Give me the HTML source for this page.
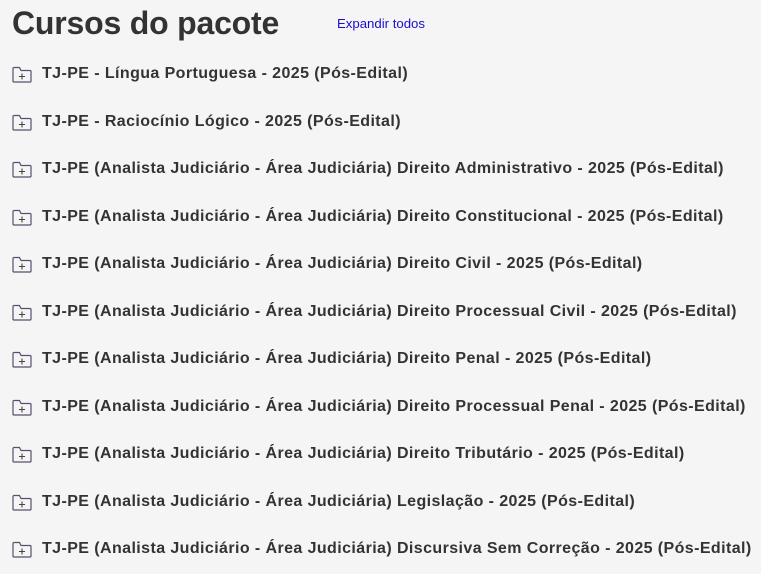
<!DOCTYPE html>
<html><head><meta charset="utf-8"><style>
body{margin:0;background:#f5f5f5;width:761px;height:574px;overflow:hidden;font-family:"Liberation Sans",sans-serif;color:#333}
h1{position:absolute;left:12px;top:1px;margin:0;font-size:32px;line-height:44px;font-weight:bold;color:#333;letter-spacing:-0.2px}
.exp{position:absolute;left:337px;top:16px;font-size:13.2px;color:#1a0dcc}
.row{position:absolute;left:12px;height:20px;display:flex;align-items:center;font-size:16px;font-weight:bold;color:#333;white-space:nowrap;letter-spacing:0.41px}
.row svg{margin-right:10px}
</style></head><body>
<h1>Cursos do pacote</h1>
<div class="exp">Expandir todos</div>
<div class="row" style="top:64px"><svg width="20" height="17" viewBox="0 0 20 17"><path d="M1 2.5V15a1 1 0 0 0 1 1h16a1 1 0 0 0 1-1V5.5a1 1 0 0 0-1-1H9L7.5 1.5H2a1 1 0 0 0-1 1z" fill="none" stroke="#5a4e6e" stroke-width="1.2"/><path d="M10 7.5v6M7 10.5h6" stroke="#444" stroke-width="1.1"/></svg>TJ-PE - Língua Portuguesa - 2025 (Pós-Edital)</div>
<div class="row" style="top:112px"><svg width="20" height="17" viewBox="0 0 20 17"><path d="M1 2.5V15a1 1 0 0 0 1 1h16a1 1 0 0 0 1-1V5.5a1 1 0 0 0-1-1H9L7.5 1.5H2a1 1 0 0 0-1 1z" fill="none" stroke="#5a4e6e" stroke-width="1.2"/><path d="M10 7.5v6M7 10.5h6" stroke="#444" stroke-width="1.1"/></svg>TJ-PE - Raciocínio Lógico - 2025 (Pós-Edital)</div>
<div class="row" style="top:159px"><svg width="20" height="17" viewBox="0 0 20 17"><path d="M1 2.5V15a1 1 0 0 0 1 1h16a1 1 0 0 0 1-1V5.5a1 1 0 0 0-1-1H9L7.5 1.5H2a1 1 0 0 0-1 1z" fill="none" stroke="#5a4e6e" stroke-width="1.2"/><path d="M10 7.5v6M7 10.5h6" stroke="#444" stroke-width="1.1"/></svg>TJ-PE (Analista Judiciário - Área Judiciária) Direito Administrativo - 2025 (Pós-Edital)</div>
<div class="row" style="top:207px"><svg width="20" height="17" viewBox="0 0 20 17"><path d="M1 2.5V15a1 1 0 0 0 1 1h16a1 1 0 0 0 1-1V5.5a1 1 0 0 0-1-1H9L7.5 1.5H2a1 1 0 0 0-1 1z" fill="none" stroke="#5a4e6e" stroke-width="1.2"/><path d="M10 7.5v6M7 10.5h6" stroke="#444" stroke-width="1.1"/></svg>TJ-PE (Analista Judiciário - Área Judiciária) Direito Constitucional - 2025 (Pós-Edital)</div>
<div class="row" style="top:254px"><svg width="20" height="17" viewBox="0 0 20 17"><path d="M1 2.5V15a1 1 0 0 0 1 1h16a1 1 0 0 0 1-1V5.5a1 1 0 0 0-1-1H9L7.5 1.5H2a1 1 0 0 0-1 1z" fill="none" stroke="#5a4e6e" stroke-width="1.2"/><path d="M10 7.5v6M7 10.5h6" stroke="#444" stroke-width="1.1"/></svg>TJ-PE (Analista Judiciário - Área Judiciária) Direito Civil - 2025 (Pós-Edital)</div>
<div class="row" style="top:302px"><svg width="20" height="17" viewBox="0 0 20 17"><path d="M1 2.5V15a1 1 0 0 0 1 1h16a1 1 0 0 0 1-1V5.5a1 1 0 0 0-1-1H9L7.5 1.5H2a1 1 0 0 0-1 1z" fill="none" stroke="#5a4e6e" stroke-width="1.2"/><path d="M10 7.5v6M7 10.5h6" stroke="#444" stroke-width="1.1"/></svg>TJ-PE (Analista Judiciário - Área Judiciária) Direito Processual Civil - 2025 (Pós-Edital)</div>
<div class="row" style="top:349px"><svg width="20" height="17" viewBox="0 0 20 17"><path d="M1 2.5V15a1 1 0 0 0 1 1h16a1 1 0 0 0 1-1V5.5a1 1 0 0 0-1-1H9L7.5 1.5H2a1 1 0 0 0-1 1z" fill="none" stroke="#5a4e6e" stroke-width="1.2"/><path d="M10 7.5v6M7 10.5h6" stroke="#444" stroke-width="1.1"/></svg>TJ-PE (Analista Judiciário - Área Judiciária) Direito Penal - 2025 (Pós-Edital)</div>
<div class="row" style="top:397px"><svg width="20" height="17" viewBox="0 0 20 17"><path d="M1 2.5V15a1 1 0 0 0 1 1h16a1 1 0 0 0 1-1V5.5a1 1 0 0 0-1-1H9L7.5 1.5H2a1 1 0 0 0-1 1z" fill="none" stroke="#5a4e6e" stroke-width="1.2"/><path d="M10 7.5v6M7 10.5h6" stroke="#444" stroke-width="1.1"/></svg>TJ-PE (Analista Judiciário - Área Judiciária) Direito Processual Penal - 2025 (Pós-Edital)</div>
<div class="row" style="top:444px"><svg width="20" height="17" viewBox="0 0 20 17"><path d="M1 2.5V15a1 1 0 0 0 1 1h16a1 1 0 0 0 1-1V5.5a1 1 0 0 0-1-1H9L7.5 1.5H2a1 1 0 0 0-1 1z" fill="none" stroke="#5a4e6e" stroke-width="1.2"/><path d="M10 7.5v6M7 10.5h6" stroke="#444" stroke-width="1.1"/></svg>TJ-PE (Analista Judiciário - Área Judiciária) Direito Tributário - 2025 (Pós-Edital)</div>
<div class="row" style="top:492px"><svg width="20" height="17" viewBox="0 0 20 17"><path d="M1 2.5V15a1 1 0 0 0 1 1h16a1 1 0 0 0 1-1V5.5a1 1 0 0 0-1-1H9L7.5 1.5H2a1 1 0 0 0-1 1z" fill="none" stroke="#5a4e6e" stroke-width="1.2"/><path d="M10 7.5v6M7 10.5h6" stroke="#444" stroke-width="1.1"/></svg>TJ-PE (Analista Judiciário - Área Judiciária) Legislação - 2025 (Pós-Edital)</div>
<div class="row" style="top:539px"><svg width="20" height="17" viewBox="0 0 20 17"><path d="M1 2.5V15a1 1 0 0 0 1 1h16a1 1 0 0 0 1-1V5.5a1 1 0 0 0-1-1H9L7.5 1.5H2a1 1 0 0 0-1 1z" fill="none" stroke="#5a4e6e" stroke-width="1.2"/><path d="M10 7.5v6M7 10.5h6" stroke="#444" stroke-width="1.1"/></svg>TJ-PE (Analista Judiciário - Área Judiciária) Discursiva Sem Correção - 2025 (Pós-Edital)</div>
</body></html>
